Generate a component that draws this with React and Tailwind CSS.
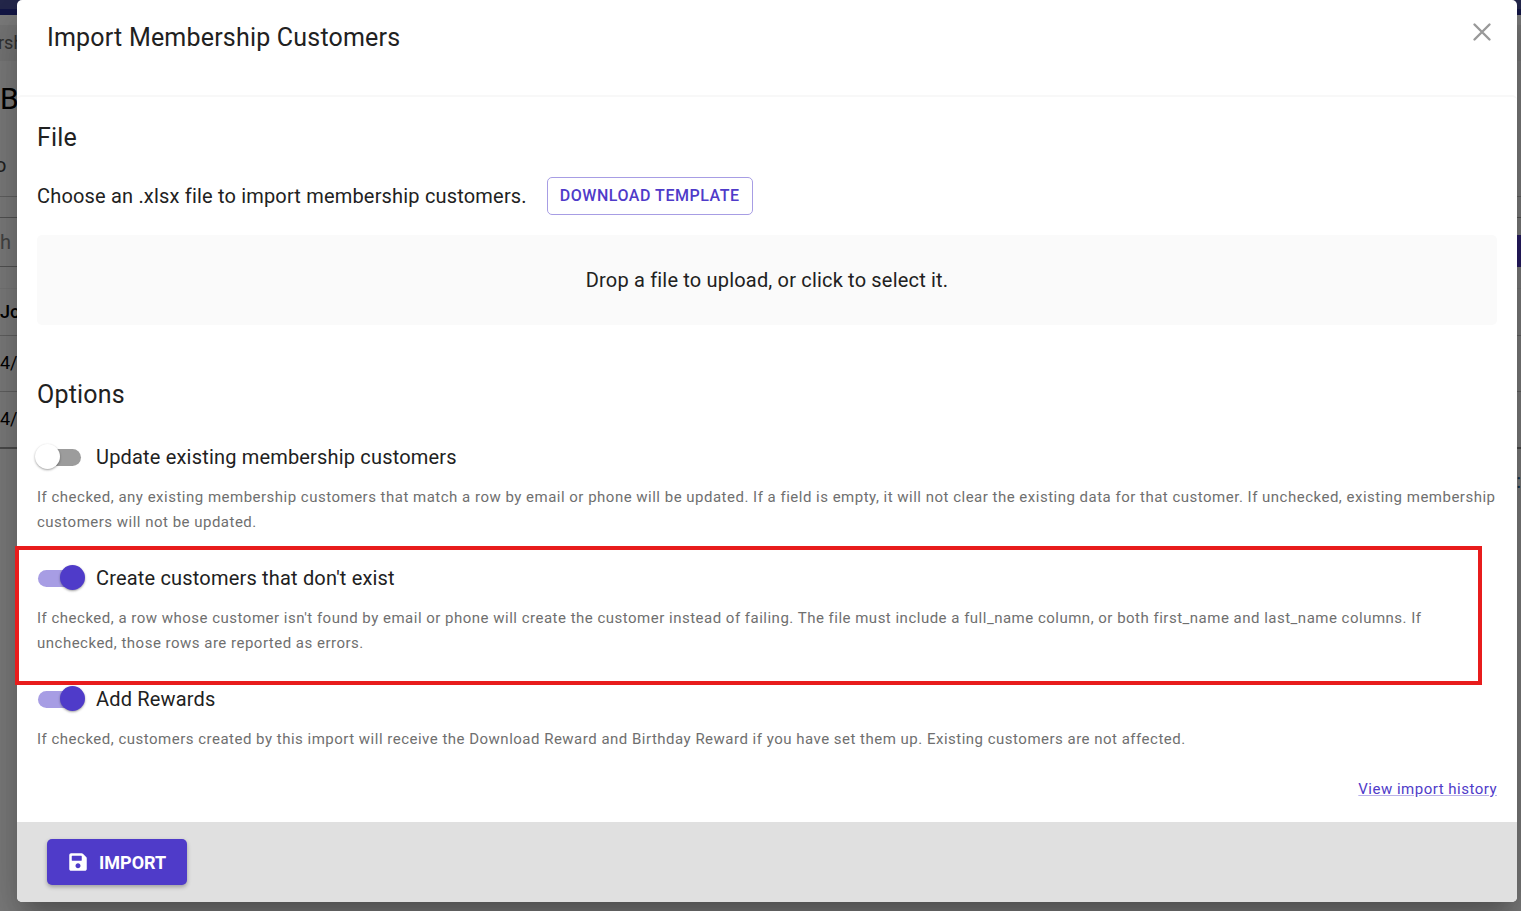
import React, { useState } from 'react';
import { FaSave } from 'react-icons/fa';

const OPTIONS = [
  {
    id: 'update-existing',
    label: 'Update existing membership customers',
    help: 'If checked, any existing membership customers that match a row by email or phone will be updated. If a field is empty, it will not clear the existing data for that customer. If unchecked, existing membership customers will not be updated.',
    checked: false,
  },
  {
    id: 'create-missing',
    label: "Create customers that don't exist",
    help: "If checked, a row whose customer isn't found by email or phone will create the customer instead of failing. The file must include a full_name column, or both first_name and last_name columns. If unchecked, those rows are reported as errors.",
    checked: true,
    highlighted: true,
  },
  {
    id: 'add-rewards',
    label: 'Add Rewards',
    help: 'If checked, customers created by this import will receive the Download Reward and Birthday Reward if you have set them up. Existing customers are not affected.',
    checked: true,
  },
];

function CloseIcon() {
  return (
    <svg viewBox="0 0 20 20" className="w-5 h-5" fill="none" stroke="currentColor" strokeWidth="2.4" strokeLinecap="round" aria-hidden="true">
      <path d="M2.5 2.5 17.5 17.5M17.5 2.5 2.5 17.5" />
    </svg>
  );
}

function Option({ option }) {
  const [checked, setChecked] = useState(option.checked);

  return (
    <div className="relative pb-[19px]">
      {option.highlighted && (
        <div className="absolute -left-[22px] right-[15px] -top-2 -bottom-[10px] border-4 border-[#e81c1c] pointer-events-none" />
      )}
      <label htmlFor={option.id} className="flex items-center h-12 gap-[10px] w-fit cursor-pointer">
        <span className="relative flex items-center w-[49px] h-[26px]">
          <input
            id={option.id}
            type="checkbox"
            role="switch"
            checked={checked}
            onChange={(e) => setChecked(e.target.checked)}
            className="peer appearance-none w-[43px] h-[17px] ml-px rounded-full bg-[#9c9c9c] checked:bg-[#a79de4] cursor-pointer"
          />
          <span className="absolute -left-[2px] top-0 w-[25px] h-[25px] rounded-full bg-white shadow-[0_1px_2px_rgba(0,0,0,0.25),0_1px_3px_rgba(0,0,0,0.14)] peer-checked:left-[23px] peer-checked:bg-[#4f3bc9] pointer-events-none" />
        </span>
        <span className="text-[20px] leading-[30px] tracking-[0.009em]">{option.label}</span>
      </label>
      <p className="mt-1 text-[15px] leading-[25px] tracking-[0.033em] text-[#6f6f6f]">{option.help}</p>
    </div>
  );
}

// Membership page that stays behind the dialog
function PageBehind() {
  return (
    <div className="absolute inset-0 overflow-hidden bg-[#fafafa] text-[20px] text-black" aria-hidden="true">
      <div className="h-[15px] bg-[#4a5199] border-b-6 border-[#262c8c]" />
      <div className="h-[10px]" />
      <div className="h-[36px] bg-[#eeeeee] text-[18px] leading-[36px] text-[#666] -ml-[2px]">rsh</div>
      <div className="h-[76px] text-[30px] leading-[76px]">B</div>
      <div className="h-[60px] leading-[56px] text-[#444] border-b border-[#c4c4c4] -ml-[5px]">o</div>
      <div className="h-[20px]" />
      <div className="flex justify-between h-[50px] leading-[48px] text-[#888] border-y border-[#a8a8a8]">
        h
        <span className="w-[4px] h-[32px] mt-[17px] bg-[#4f3bc9]" />
      </div>
      <div className="h-[21px]" />
      <div className="h-[48px] text-[18px] leading-[46px] font-medium border-y border-t-[#eee] border-b-[#c4c4c4]">Jo</div>
      <div className="h-[56px] text-[18px] leading-[54px] border-b border-[#c4c4c4]">4/</div>
      <div className="h-[57px] text-[18px] leading-[54px] border-b-2 border-[#999]">4/</div>
      <div className="h-[64px] leading-[64px] text-right text-[#2a6a9a]">:</div>
    </div>
  );
}

export default function App() {
  return (
    <div className="relative min-h-screen overflow-hidden font-[Roboto,sans-serif] text-[#212121]">
      <PageBehind />
      <div className="absolute inset-0 bg-black/50" />

      <div className="relative pl-[17px] pr-1 pb-[9px]">
        <div
          role="dialog"
          aria-labelledby="dialog-title"
          className="bg-white rounded-[5px] shadow-[0_14px_19px_-9px_rgba(0,0,0,0.2),0_30px_48px_4px_rgba(0,0,0,0.14),0_11px_58px_10px_rgba(0,0,0,0.12)]"
        >
          <header className="flex items-start justify-between h-[95px] pl-[30px] pr-[25px] pt-[22px]">
            <h2 id="dialog-title" className="text-[25px] leading-8 tracking-[0.008em]">Import Membership Customers</h2>
            <button type="button" aria-label="Close" className="text-[#999] cursor-pointer">
              <CloseIcon />
            </button>
          </header>

          <main className="border-t-2 border-[#f8f8f8] rounded-t-[5px] px-5 pt-[25px] pb-5">
            <h3 className="text-[25px] leading-8 tracking-[0.008em]">File</h3>
            <div className="flex items-center gap-5 mt-[23px]">
              <p className="text-[20px] leading-[30px] tracking-[0.009em]">Choose an .xlsx file to import membership customers.</p>
              <button type="button" className="h-[38px] px-3 rounded-[5px] border border-[#a79de4] text-[16px] font-medium tracking-[0.033em] text-[#4f3bc9] cursor-pointer">
                DOWNLOAD TEMPLATE
              </button>
            </div>
            <button type="button" className="block w-full h-[90px] mt-5 rounded-[5px] bg-[#fafafa] text-[20px] tracking-[0.009em] cursor-pointer">
              Drop a file to upload, or click to select it.
            </button>

            <h3 className="mt-[54px] mb-[22px] text-[25px] leading-8 tracking-[0.008em]">Options</h3>
            {OPTIONS.map((option) => (
              <Option key={option.id} option={option} />
            ))}

            <div className="mt-[6px] text-right">
              <a href="#history" className="text-[15px] leading-[25px] tracking-[0.033em] text-[#4f3bc9] underline decoration-[#b9b1e9]">
                View import history
              </a>
            </div>
          </main>

          <footer className="h-20 px-[30px] flex items-center rounded-b-[5px] bg-[#e0e0e0]">
            <button type="button" className="flex items-center gap-[11px] h-[46px] px-[21px] rounded-[5px] bg-[#4f3bc9] text-white text-[18px] font-bold shadow-[0_2px_4px_rgba(0,0,0,0.3)] cursor-pointer">
              <FaSave className="w-5 h-5" aria-hidden="true" />
              IMPORT
            </button>
          </footer>
        </div>
      </div>
    </div>
  );
}
